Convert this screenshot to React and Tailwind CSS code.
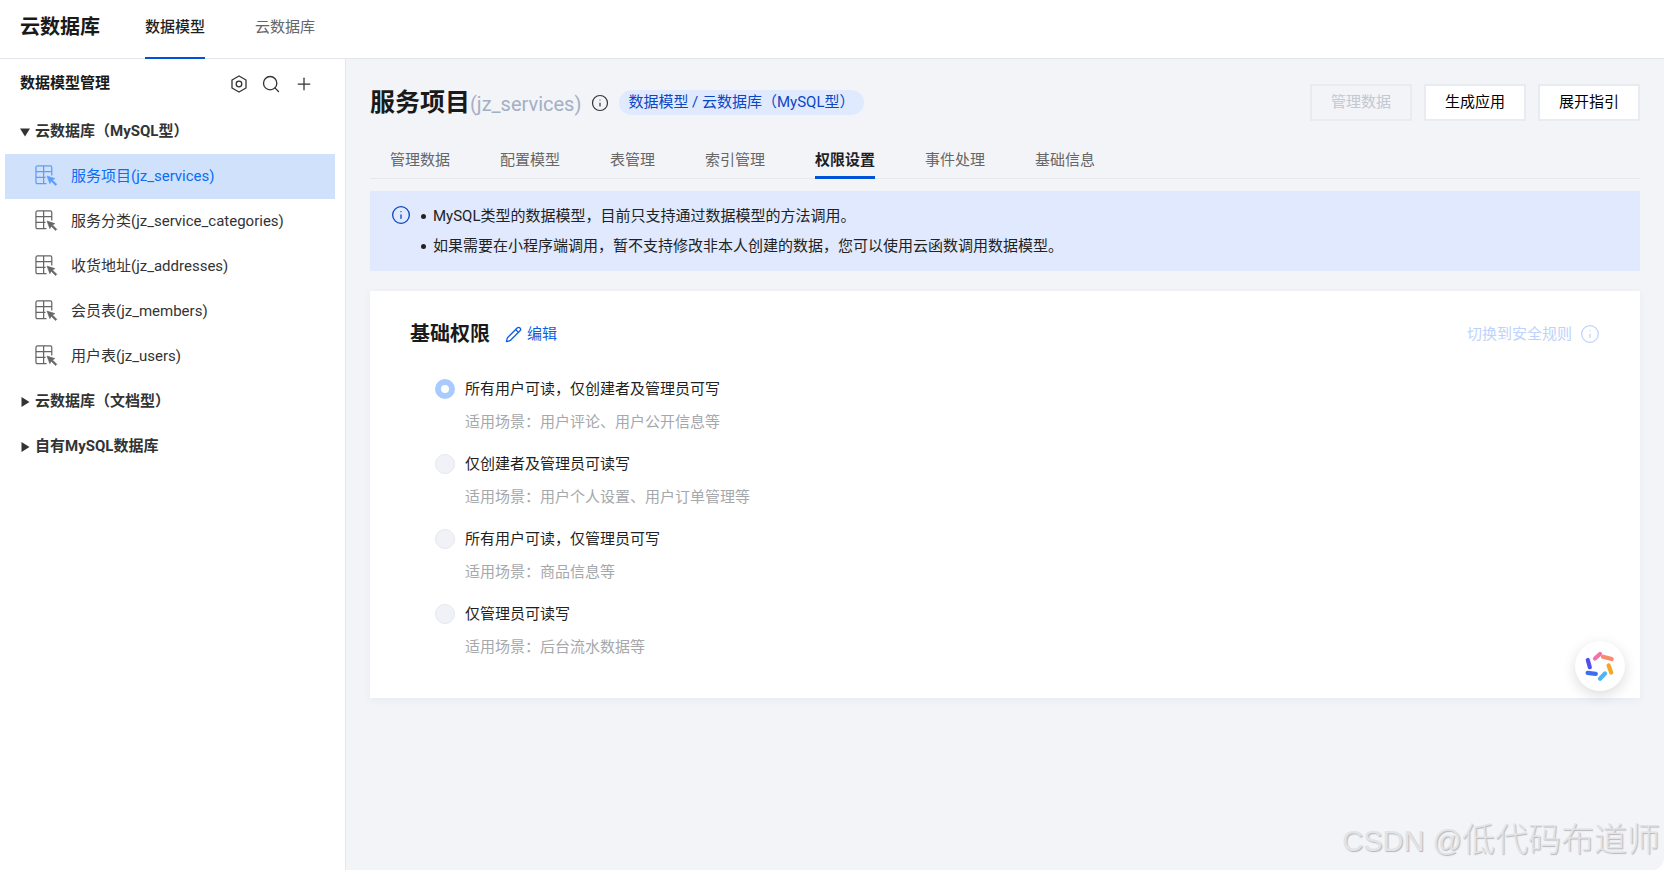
import { Search, Plus, Info, Pencil } from "lucide-react";

const models = [
  "服务项目(jz_services)",
  "服务分类(jz_service_categories)",
  "收货地址(jz_addresses)",
  "会员表(jz_members)",
  "用户表(jz_users)",
];

const tabs = ["管理数据", "配置模型", "表管理", "索引管理", "权限设置", "事件处理", "基础信息"];

const options = [
  { title: "所有用户可读，仅创建者及管理员可写", desc: "适用场景：用户评论、用户公开信息等", checked: true },
  { title: "仅创建者及管理员可读写", desc: "适用场景：用户个人设置、用户订单管理等" },
  { title: "所有用户可读，仅管理员可写", desc: "适用场景：商品信息等" },
  { title: "仅管理员可读写", desc: "适用场景：后台流水数据等" },
];

const TableIcon = ({ className }) => (
  <svg viewBox="0 0 24 24" fill="none" stroke="currentColor" strokeWidth="1.3" className={className}>
    <path d="M12 19.5H2.5A1.5 1.5 0 0 1 1 18V2.5A1.5 1.5 0 0 1 2.5 1h13.5A1.5 1.5 0 0 1 17.5 2.5V11" />
    <path d="M1 7h16.5M1 13h10M9 1v18.5" />
    <path d="M12.5 11.5l3 8 1.4-2.6 4.6 4.6 1.3-1.3-4.6-4.6 2.6-1.4z" fill="currentColor" strokeWidth="0.6" strokeLinejoin="round" />
  </svg>
);

const HexIcon = () => (
  <svg viewBox="0 0 18 18" fill="none" stroke="#333" strokeWidth="1.3" className="w-[18px] h-[18px]">
    <path d="M9 1l7 4v8l-7 4-7-4V5z" strokeLinejoin="round" />
    <circle cx="9" cy="9" r="2.8" />
  </svg>
);

const Caret = ({ open }) => (
  <svg viewBox="0 0 10 10" className="w-[10px] h-[10px] shrink-0 fill-[#333]">
    {open ? <path d="M0 1.5h10L5 9.5z" /> : <path d="M1.5 0v10L9.5 5z" />}
  </svg>
);

const Logo = () => (
  <svg viewBox="0 0 32 32" fill="none" strokeWidth="4.2" strokeLinecap="round" className="w-8 h-8">
    <path d="M11 8.5l5-4.5" stroke="#f472a8" />
    <path d="M19 6.7l8.7 2.4" stroke="#fb8a6c" />
    <path d="M24.6 15.5l2.6 7" stroke="#f5a623" />
    <path d="M16 28.8l5-5.3" stroke="#4db4f5" />
    <path d="M3.6 22.8l8.2 1" stroke="#3b6ff0" />
    <path d="M3.8 10l2 7.2" stroke="#5050f0" />
  </svg>
);

export default function App() {
  return (
    <div className="h-screen flex flex-col bg-white overflow-hidden text-[#1f1f1f] font-['Roboto','Noto_Sans_CJK_SC',sans-serif]">
      {/* top bar */}
      <div className="h-[59px] shrink-0 flex border-b border-[#e4e6eb]">
        <div className="w-[145px] pl-5 pt-[13px] text-[20px] leading-7 font-bold text-[#1a1a1a]">云数据库</div>
        <div className="w-[60px] h-[59px] border-b-2 border-[#0052d9] text-[15px] leading-[54px] font-medium text-center">数据模型</div>
        <div className="ml-[50px] w-[60px] text-[15px] leading-[54px] text-center text-[#666]">云数据库</div>
      </div>

      <div className="flex-1 flex min-h-0">
        {/* sidebar */}
        <div className="w-[346px] shrink-0 border-r border-[#e4e6eb]">
          <div className="h-[50px] pl-5 pr-[31px] pb-[2px] flex items-center justify-between">
            <span className="text-[15px] font-bold text-[#1a1a1a]">数据模型管理</span>
            <div className="mt-[2px] flex items-center gap-[13px] text-[#333]">
              <HexIcon />
              <Search size={20} strokeWidth={1.6} />
              <Plus size={20} strokeWidth={1.5} />
            </div>
          </div>
          <div className="flex flex-col text-[15px]">
            <div className="h-[45px] pl-5 flex items-center gap-[5px] font-bold text-[#333]">
              <Caret open />
              <span>云数据库（MySQL型）</span>
            </div>
            {models.map((m, i) => (
              <div
                key={m}
                className={
                  i === 0
                    ? "h-[45px] ml-[5px] mr-[10px] pl-[30px] flex items-center gap-[13px] bg-[#d0e1fb] text-[#0b6ef5]"
                    : "h-[45px] ml-[5px] mr-[10px] pl-[30px] flex items-center gap-[13px] text-[#333]"
                }
              >
                <TableIcon className={i === 0 ? "w-[23px] h-[23px] text-[#5f9dfa]" : "w-[23px] h-[23px] text-[#666]"} />
                <span>{m}</span>
              </div>
            ))}
            <div className="h-[45px] pl-5 flex items-center gap-[5px] font-bold text-[#333]">
              <Caret />
              <span>云数据库（文档型）</span>
            </div>
            <div className="h-[45px] pl-5 flex items-center gap-[5px] font-bold text-[#333]">
              <Caret />
              <span>自有MySQL数据库</span>
            </div>
          </div>
        </div>

        {/* main */}
        <div className="relative flex-1 bg-[#f2f4f8] pl-6 pr-6 pt-[25px] rounded-br-[12px]">
          <div className="h-[37px] flex items-center">
            <h1 className="text-[25px] font-bold text-[#1a1a1a]">服务项目</h1>
            <span className="mt-[2px] text-[20px] text-[#a4afc4]">(jz_services)</span>
            <Info size={18} strokeWidth={1.6} className="ml-[10px] text-[#333]" />
            <span className="ml-[10px] h-[25px] pl-[9px] pr-[9px] rounded-full bg-[#e0eaff] text-[15px] leading-[25px] text-[#0b46c4]">
              数据模型 / 云数据库（MySQL型）
            </span>
            <div className="ml-auto flex gap-3">
              <button className="w-[102px] h-[37px] border-2 border-[#e8ebf1] text-[15px] text-[#c3c8d2]">管理数据</button>
              <button className="w-[102px] h-[37px] border-2 border-[#e8ebf1] bg-white text-[15px] text-black">生成应用</button>
              <button className="w-[102px] h-[37px] border-2 border-[#e8ebf1] bg-white text-[15px] text-black">展开指引</button>
            </div>
          </div>

          <div className="mt-[19px] h-[39px] pl-5 flex gap-[50px] border-b border-[#e6e8ee]">
            {tabs.map((t) => (
              <div
                key={t}
                className={
                  t === "权限设置"
                    ? "h-[39px] leading-[40px] text-[15px] font-bold text-[#1f1f1f] border-b-[3px] border-[#0052d9]"
                    : "h-[39px] leading-[40px] text-[15px] text-[#666]"
                }
              >
                {t}
              </div>
            ))}
          </div>

          <div className="mt-3 h-[80px] pl-[22px] pt-[10px] flex gap-[10px] bg-[#e0e9fd]">
            <Info size={20} strokeWidth={1.6} className="mt-[4px] -ml-px text-[#0b46c4]" />
            <ul className="text-[15px] text-[#222]">
              <li className="h-[30px] flex items-center gap-[7px]">
                <span className="w-[5px] h-[5px] rounded-full bg-[#222]" />
                MySQL类型的数据模型，目前只支持通过数据模型的方法调用。
              </li>
              <li className="h-[30px] flex items-center gap-[7px]">
                <span className="w-[5px] h-[5px] rounded-full bg-[#222]" />
                如果需要在小程序端调用，暂不支持修改非本人创建的数据，您可以使用云函数调用数据模型。
              </li>
            </ul>
          </div>

          <div className="mt-5 h-[407px] bg-white pl-10 pr-10 pt-[28px] shadow-[0_2px_8px_rgba(30,50,90,0.05)]">
            <div className="h-[30px] flex items-center">
              <h2 className="text-[20px] font-bold text-[#1a1a1a]">基础权限</h2>
              <Pencil size={17} strokeWidth={1.8} className="ml-[15px] text-[#0b5fe0]" />
              <span className="ml-[5px] text-[15px] text-[#0b5fe0]">编辑</span>
              <span className="ml-auto text-[15px] text-[#bdd3fb]">切换到安全规则</span>
              <Info size={20} strokeWidth={1.5} className="ml-2 text-[#bdd3fb]" />
            </div>

            <div className="mt-[28px] ml-[25px] flex flex-col gap-[18px]">
              {options.map((o) => (
                <div key={o.title}>
                  <div className="h-6 flex items-center gap-[10px]">
                    {o.checked ? (
                      <span className="w-5 h-5 rounded-full border-[6px] border-[#a8cbff] bg-white" />
                    ) : (
                      <span className="w-5 h-5 rounded-full border border-[#e6e8ee] bg-[#f0f2f7]" />
                    )}
                    <span className="text-[15px] text-[#1f1f1f]">{o.title}</span>
                  </div>
                  <div className="mt-[9px] h-6 pl-[30px] text-[15px] leading-6 text-[#a6a8ac]">{o.desc}</div>
                </div>
              ))}
            </div>
          </div>

          <div className="absolute right-[39px] top-[582px] w-[50px] h-[50px] rounded-full bg-white shadow-[0_4px_14px_rgba(0,0,0,0.14)] flex items-center justify-center">
            <Logo />
          </div>

          <div className="absolute right-1 bottom-[9px] text-[33px] leading-10 font-light text-[#e2e3e6] [text-shadow:1px_1px_1px_#b4b6bc] font-['Liberation_Sans','Noto_Sans_CJK_SC',sans-serif] whitespace-nowrap">
            <span className="text-[29px]">CSDN @</span>低代码布道师
          </div>
        </div>
      </div>
    </div>
  );
}
